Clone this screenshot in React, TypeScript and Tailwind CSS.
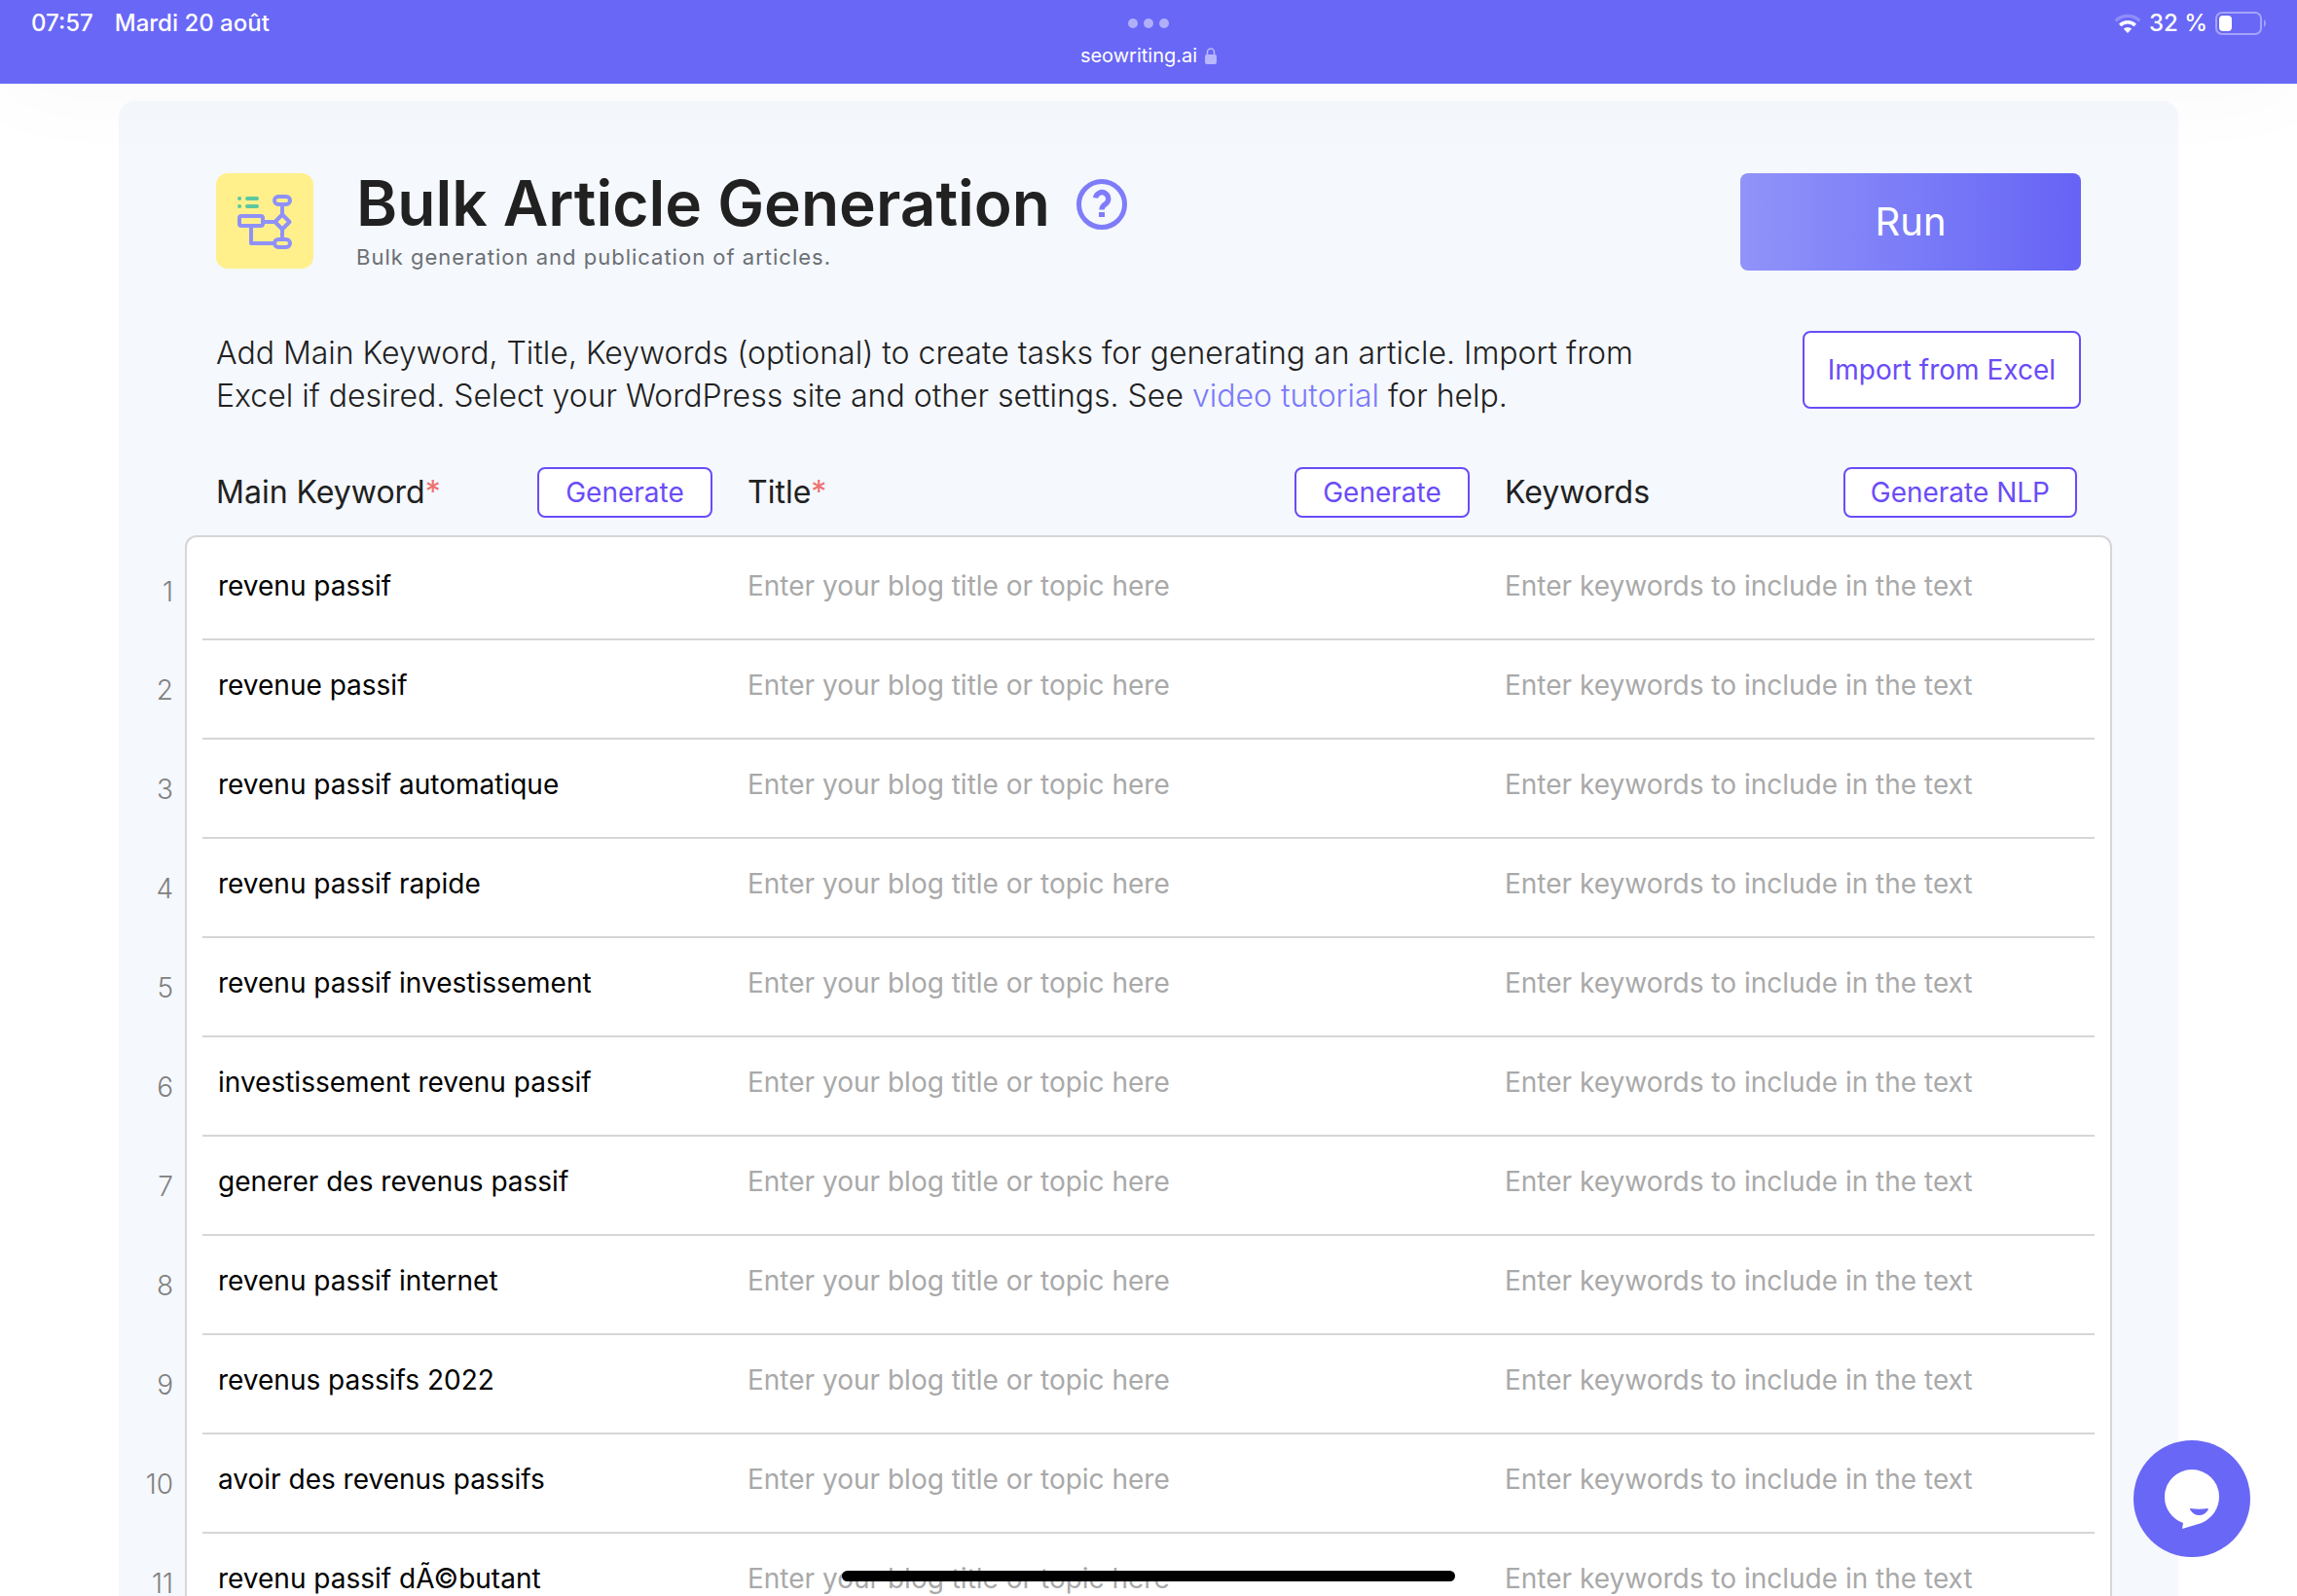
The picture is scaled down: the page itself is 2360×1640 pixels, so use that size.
import React from 'react';

const keywords = [
  'revenu passif',
  'revenue passif',
  'revenu passif automatique',
  'revenu passif rapide',
  'revenu passif investissement',
  'investissement revenu passif',
  'generer des revenus passif',
  'revenu passif internet',
  'revenus passifs 2022',
  'avoir des revenus passifs',
  'revenu passif dÃ©butant',
];

const outlineButton = 'shrink-0 rounded-lg border-2 border-[#6a4cf7] bg-white text-[28px] leading-8 text-[#6a4cf7]';
const cellInput =
  'block h-9 w-full bg-transparent px-4 text-[28px] leading-9 text-black outline-none placeholder:text-[#a9a9a9]';
const rowLine = 'h-[102px] border-b-2 border-[#d6d6d6] pt-7';

const StatusBar = () => (
  <header className="relative z-20 grid h-[86px] grid-cols-3 bg-[#6967f6] px-8 text-white shadow-[0_4px_100px_rgba(0,0,0,0.03)]">
    <div className="flex gap-[22px] pt-2 text-2xl font-medium">
      <span>07:57</span>
      <span>Mardi 20 août</span>
    </div>
    <div className="flex flex-col items-center pt-[19px]">
      <div className="flex gap-[6px]">
        <span className="size-[10px] rounded-full bg-[#b1affa]" />
        <span className="size-[10px] rounded-full bg-[#b1affa]" />
        <span className="size-[10px] rounded-full bg-[#b1affa]" />
      </div>
      <div className="mt-4 flex items-center gap-2 text-xl leading-6">
        <span>seowriting.ai</span>
        <svg viewBox="0 0 12 17" className="h-[17px] w-3" fill="none">
          <path d="M2.5 8V4.6a3.5 3.5 0 0 1 7 0V8" stroke="#b9b7fb" strokeWidth="1.5" />
          <rect y="7" width="12" height="10" rx="2" fill="#b9b7fb" />
        </svg>
      </div>
    </div>
    <div className="flex h-12 items-center justify-end">
      <svg viewBox="0 0 28 21" className="mr-2 h-[21px] w-7">
        <path d="M.5 6.2a19.2 19.2 0 0 1 27 0l-2.4 2.5a15.7 15.7 0 0 0-22.2 0z" fill="#8f8df9" />
        <path d="M5 10.7a12.8 12.8 0 0 1 18 0l-2.5 2.6a9.2 9.2 0 0 0-13 0z" fill="#fff" />
        <path d="M9.8 15.6a6 6 0 0 1 8.4 0L14 20z" fill="#fff" />
      </svg>
      <span className="text-2xl font-medium">32 %</span>
      <svg viewBox="0 0 54 24" className="-mr-[2px] ml-2 h-6 w-[54px]">
        <rect x="1" y="1" width="46" height="22" rx="6" fill="none" stroke="#a5a4fa" strokeWidth="2" />
        <rect x="4" y="4" width="13" height="16" rx="4" fill="#fff" />
        <path d="M50 8a5 5 0 0 1 0 8z" fill="#a5a4fa" />
      </svg>
    </div>
  </header>
);

const BulkIcon = () => (
  <svg viewBox="0 0 100 98" className="h-[98px] w-[100px] shrink-0" fill="none">
    <rect width="100" height="98" rx="12" fill="#fff08c" />
    <g stroke="#5bc8a0" strokeWidth="4" strokeLinecap="round">
      <path d="M24 26h.1M24 34h.1M32 26h10M32 34h10" />
    </g>
    <g stroke="#8f91f9" strokeWidth="4" strokeLinejoin="round">
      <rect x="60" y="24" width="16" height="8" rx="4" />
      <rect x="24" y="44" width="24" height="10" rx="2" />
      <path d="M68 42.5l7.5 7.5-7.5 7.5-7.5-7.5zM68 32v10M68 58v10M48 50h12M36 54v18h24" />
      <rect x="60" y="68" width="16" height="8" rx="4" />
    </g>
  </svg>
);

const HelpIcon = () => (
  <svg viewBox="0 0 52 52" className="size-[52px]" fill="none" stroke="#7f7cfa">
    <circle cx="26" cy="26" r="23.5" strokeWidth="5" />
    <path d="M19.6 19.4a6.6 6.6 0 1 1 10.4 6.2c-2.6 1.7-4 2.8-4 6" strokeWidth="5.4" />
    <path d="M26 34v5" strokeWidth="6" />
  </svg>
);

const PageHeader = () => (
  <div className="flex items-start justify-between">
    <div className="flex gap-11">
      <BulkIcon />
      <div>
        <div className="flex items-center gap-[27px]">
          <h1 className="text-[64px] leading-[62px] font-semibold text-[#212121]">Bulk Article Generation</h1>
          <button type="button" aria-label="Help" className="mt-[2px]">
            <HelpIcon />
          </button>
        </div>
        <p className="mt-[10px] text-[22px] leading-7 tracking-[1px] text-[#6b6f73]">
          Bulk generation and publication of articles.
        </p>
      </div>
    </div>
    <button
      type="button"
      className="h-[100px] w-[350px] rounded-lg bg-linear-to-r from-[#9193f9] to-[#6663f5] text-[40px] text-white"
    >
      Run
    </button>
  </div>
);

const Heading = ({ label, action, required = false }: { label: string; action: string; required?: boolean }) => (
  <div className="flex items-center justify-between">
    <span className="text-[32px] leading-10 text-[#212121]">
      {label}
      {required && <span className="text-[#ef7070]">*</span>}
    </span>
    <button type="button" className={`${outlineButton} h-[52px] min-w-[180px] px-[26px]`}>
      {action}
    </button>
  </div>
);

const KeywordTable = () => (
  <div className="mt-[51px] pr-[68px]">
    <table className="w-full table-fixed border-separate border-spacing-0 text-left">
      <colgroup>
        <col className="w-[68px]" />
        <col className="w-[562px]" />
        <col className="w-[778px]" />
        <col />
      </colgroup>
      <thead>
        <tr>
          <td />
          <th scope="col" className="pr-5 pb-[18px] pl-8 font-normal">
            <Heading label="Main Keyword" action="Generate" required />
          </th>
          <th scope="col" className="pr-5 pb-[18px] pl-4 font-normal">
            <Heading label="Title" action="Generate" required />
          </th>
          <th scope="col" className="pr-9 pb-[18px] pl-4 font-normal">
            <Heading label="Keywords" action="Generate NLP" />
          </th>
        </tr>
      </thead>
      <tbody>
        {keywords.map((keyword, index) => (
          <tr key={keyword} className="group">
            <th scope="row" className="pr-3 text-right text-[28px] leading-9 font-light text-[#808080] group-first:pt-2">
              {index + 1}
            </th>
            <td className="border-l-2 border-[#d6d6d6] bg-white pl-4 group-first:rounded-tl-xl group-first:border-t-2 group-first:pt-1">
              <div className={rowLine}>
                <input aria-label={`Main keyword ${index + 1}`} defaultValue={keyword} className={cellInput} />
              </div>
            </td>
            <td className="border-[#d6d6d6] bg-white group-first:border-t-2 group-first:pt-1">
              <div className={rowLine}>
                <input
                  aria-label={`Title ${index + 1}`}
                  placeholder="Enter your blog title or topic here"
                  className={cellInput}
                />
              </div>
            </td>
            <td className="border-r-2 border-[#d6d6d6] bg-white pr-4 group-first:rounded-tr-xl group-first:border-t-2 group-first:pt-1">
              <div className={rowLine}>
                <input
                  aria-label={`Keywords ${index + 1}`}
                  placeholder="Enter keywords to include in the text"
                  className={cellInput}
                />
              </div>
            </td>
          </tr>
        ))}
      </tbody>
    </table>
  </div>
);

const ChatButton = () => (
  <button type="button" aria-label="Open chat" className="absolute right-12 bottom-10 z-30 size-[120px] rounded-full">
    <svg viewBox="0 0 120 120" className="size-full">
      <circle cx="60" cy="60" r="60" fill="#6967f6" />
      <path d="M60 30a28 28 0 0 1 28 28c0 12-7 22-18 27L50 91l1-6A28.500 28.500 0 0 1 32 58 28 28 0 0 1 60 30z" fill="#fff" />
      <path d="M58.500 70q9 1.500 17.500 0c1 0 1 1 .5 1.800-4 7-14 7-18 0-.5-.8-.8-1.800 0-1.800z" fill="#6967f6" />
    </svg>
  </button>
);

const App = () => {
  return (
    <div className="relative h-screen overflow-hidden bg-white font-['Inter',sans-serif]">
      <StatusBar />
      <main className="mx-[122px] mt-[18px] rounded-2xl bg-[#f5f8fd] pt-[74px]">
        <div className="px-[100px]">
          <PageHeader />
          <div className="mt-[62px] flex items-start justify-between">
            <p className="max-w-[1480px] pt-px text-[32px] leading-[44px] font-light text-[#212121]">
              Add Main Keyword, Title, Keywords (optional) to create tasks for generating an article. Import from Excel
              if desired. Select your WordPress site and other settings. See{' '}
              <a href="#tutorial" className="text-[#7c7af8]">
                video tutorial
              </a>{' '}
              for help.
            </p>
            <button type="button" className={`${outlineButton} h-20 px-6`}>
              Import from Excel
            </button>
          </div>
        </div>
        <KeywordTable />
      </main>
      <ChatButton />
      <div className="absolute bottom-[15px] left-1/2 z-30 h-[11px] w-[630px] -translate-x-1/2 rounded-full bg-black" />
    </div>
  );
};

export default App;
